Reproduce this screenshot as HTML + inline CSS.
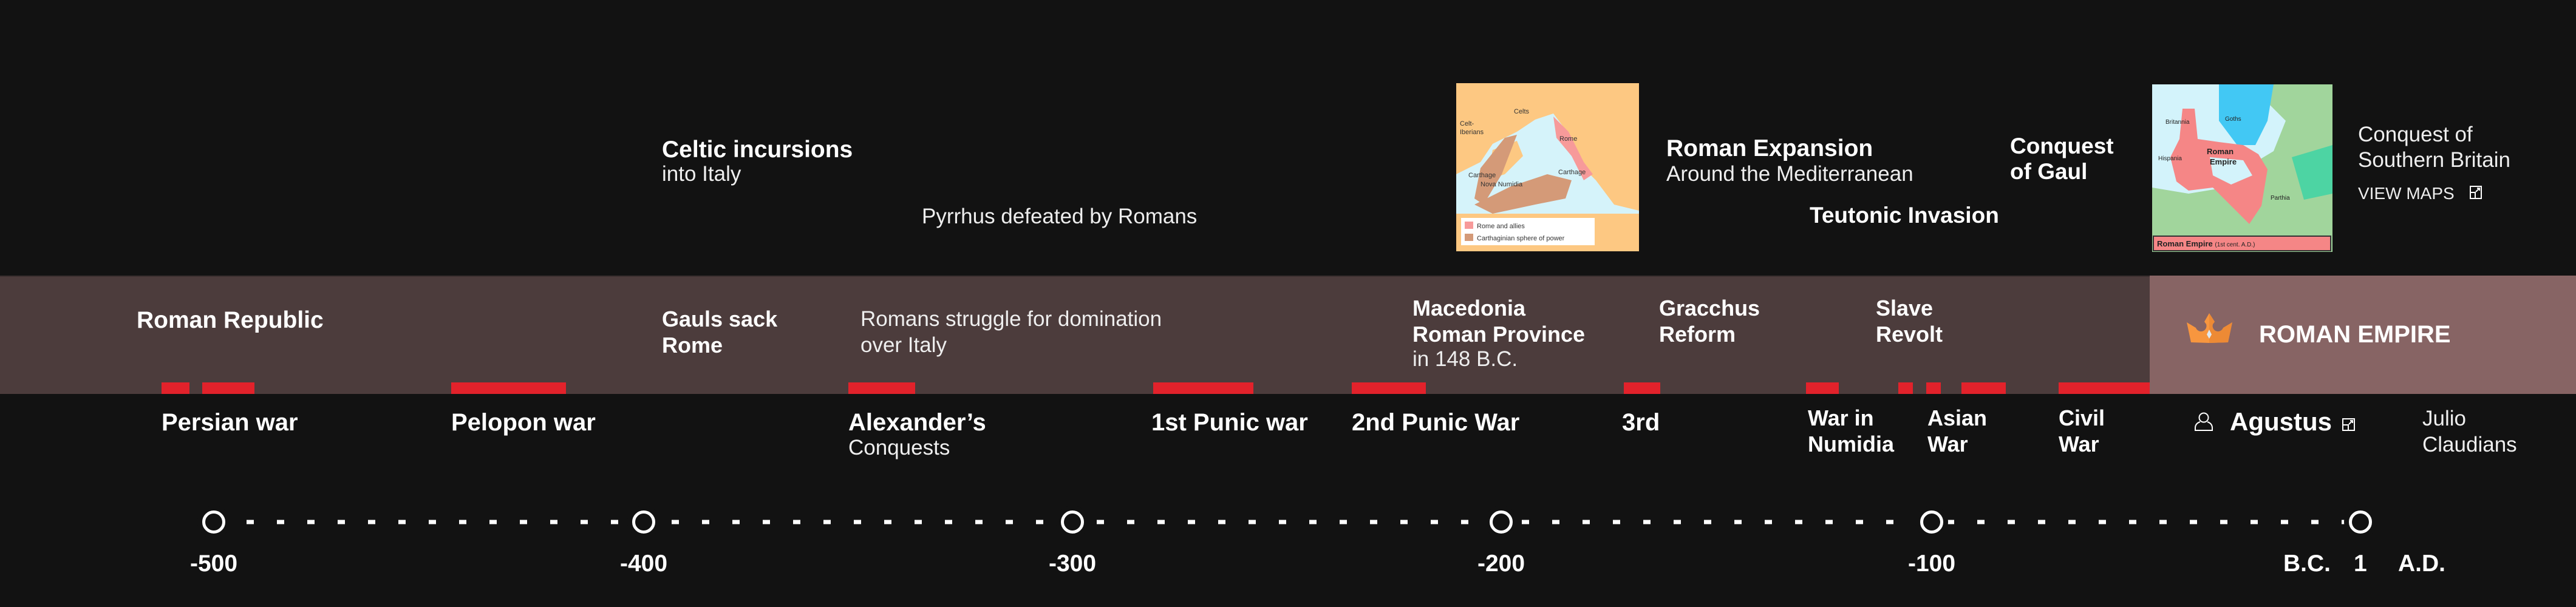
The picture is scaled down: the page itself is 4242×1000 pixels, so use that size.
<!DOCTYPE html>
<html><head><meta charset="utf-8"><style>
html,body{margin:0;padding:0;background:#121212;}
body{width:4242px;height:1000px;position:relative;overflow:hidden;font-family:"Liberation Sans",Arial,sans-serif;color:#fff;}
.t{position:absolute;white-space:nowrap;line-height:1;}
.b{font-weight:bold;font-size:39px;}
.l{font-weight:normal;font-size:35px;color:#eee;}
.r{position:absolute;background:#e2222b;top:630px;height:19px;}
.c{position:absolute;width:28px;height:28px;border:5px solid #fff;border-radius:50%;top:841px;background:#121212;box-shadow:0 0 0 8px #121212;}
.n{position:absolute;font-weight:bold;font-size:39px;top:909px;width:200px;text-align:center;line-height:1;}
</style></head><body>
<div style="position:absolute;left:0;top:454px;width:3540px;height:195px;background:#4c3c3c;border-top:2px solid #3a2f2f;box-sizing:border-box"></div>
<div style="position:absolute;left:3540px;top:454px;width:702px;height:195px;background:#876464"></div>

<div class="r" style="left:266px;width:46px"></div>
<div class="r" style="left:333px;width:86px"></div>
<div class="r" style="left:743px;width:189px"></div>
<div class="r" style="left:1397px;width:110px"></div>
<div class="r" style="left:1899px;width:165px"></div>
<div class="r" style="left:2226px;width:122px"></div>
<div class="r" style="left:2674px;width:60px"></div>
<div class="r" style="left:2974px;width:54px"></div>
<div class="r" style="left:3126px;width:24px"></div>
<div class="r" style="left:3172px;width:24px"></div>
<div class="r" style="left:3230px;width:73px"></div>
<div class="r" style="left:3390px;width:150px"></div>

<div class="t b" style="left:1090px;top:227px">Celtic incursions</div>
<div class="t l" style="left:1090px;top:269px">into Italy</div>
<div class="t l" style="left:1518px;top:339px">Pyrrhus defeated by Romans</div>

<svg style="position:absolute;left:2398px;top:137px" width="301" height="277" viewBox="0 0 301 277">
<rect width="301" height="277" fill="#fdc882"/>
<path d="M0 150 L40 130 L60 100 L100 80 L130 60 L160 50 L175 70 L200 130 L230 160 L260 200 L301 210 L301 277 L0 277Z" fill="#d5f3fa"/>
<path d="M60 110 L100 95 L110 120 L80 150 L50 160Z" fill="#fdc882"/>
<path d="M160 55 L185 80 L210 130 L225 150 L210 160 L190 120 L165 90Z" fill="#f79a9a"/>
<path d="M40 140 L80 90 L100 85 L75 150 L45 200 L30 190Z" fill="#d49a78"/>
<path d="M30 200 L90 170 L150 150 L190 160 L180 190 L130 200 L60 215Z" fill="#d49a78"/>
<path d="M0 215 L301 215 L301 277 L0 277Z" fill="#fdc882"/>
<rect x="8" y="222" width="220" height="45" fill="#fff"/>
<rect x="14" y="228" width="14" height="12" fill="#f79a9a"/><rect x="14" y="248" width="14" height="12" fill="#d49a78"/>
<text x="34" y="239" font-size="11" fill="#333" font-family="Liberation Sans">Rome and allies</text>
<text x="34" y="259" font-size="11" fill="#333" font-family="Liberation Sans">Carthaginian sphere of power</text>
<text x="95" y="50" font-size="11" fill="#333" font-family="Liberation Sans">Celts</text>
<text x="6" y="70" font-size="11" fill="#333" font-family="Liberation Sans">Celt-</text>
<text x="6" y="84" font-size="11" fill="#333" font-family="Liberation Sans">Iberians</text>
<text x="170" y="95" font-size="11" fill="#333" font-family="Liberation Sans">Rome</text>
<text x="168" y="150" font-size="11" fill="#333" font-family="Liberation Sans">Carthage</text>
<text x="20" y="155" font-size="11" fill="#333" font-family="Liberation Sans">Carthage</text>
<text x="40" y="170" font-size="11" fill="#333" font-family="Liberation Sans">Nova  Numidia</text>
</svg>

<div class="t b" style="left:2744px;top:225px">Roman Expansion</div>
<div class="t l" style="left:2744px;top:269px">Around the Mediterranean</div>
<div class="t b" style="left:3310px;top:222px;font-size:37px">Conquest</div>
<div class="t b" style="left:3310px;top:264px;font-size:37px">of Gaul</div>
<div class="t b" style="left:2980px;top:336px;font-size:37px">Teutonic Invasion</div>

<svg style="position:absolute;left:3544px;top:139px" width="297" height="276" viewBox="0 0 297 276">
<rect width="297" height="276" fill="#d3f3fb"/>
<path d="M160 0 L297 0 L297 276 L0 276 L0 170 L60 180 L120 170 L150 140 L200 110 L220 60Z" fill="#a1d59c"/>
<path d="M110 0 L200 0 L190 60 L170 100 L140 100 L110 60Z" fill="#42c8f4"/>
<path d="M230 120 L297 100 L297 180 L250 190Z" fill="#4dd4a3"/>
<path d="M50 40 L70 40 L75 90 L110 95 L150 100 L175 115 L190 140 L180 200 L160 230 L140 210 L100 170 L60 175 L40 160 L30 120 L45 90Z" fill="#f58686"/>
<path d="M95 120 L150 125 L165 150 L130 165 L100 150Z" fill="#d3f3fb"/>
<rect x="2" y="250" width="292" height="24" fill="#f58686" stroke="#333" stroke-width="2"/>
<text x="8" y="267" font-size="13" font-weight="bold" fill="#222" font-family="Liberation Sans">Roman Empire <tspan font-weight="normal" font-size="10">(1st cent. A.D.)</tspan></text>
<text x="90" y="115" font-size="13" font-weight="bold" fill="#222" font-family="Liberation Sans">Roman</text>
<text x="95" y="132" font-size="13" font-weight="bold" fill="#222" font-family="Liberation Sans">Empire</text>
<text x="22" y="65" font-size="10" fill="#222" font-family="Liberation Sans">Britannia</text>
<text x="120" y="60" font-size="10" fill="#222" font-family="Liberation Sans">Goths</text>
<text x="10" y="125" font-size="10" fill="#222" font-family="Liberation Sans">Hispania</text>
<text x="195" y="190" font-size="10" fill="#222" font-family="Liberation Sans">Parthia</text>
</svg>

<div class="t l" style="left:3883px;top:204px">Conquest of</div>
<div class="t l" style="left:3883px;top:246px">Southern Britain</div>
<div class="t l" style="left:3883px;top:305px;font-size:28px">VIEW MAPS</div>
<svg style="position:absolute;left:4067px;top:306px" width="20" height="22" viewBox="0 0 20 22" fill="none" stroke="#fff" stroke-width="2"><rect x="1" y="1" width="18" height="20"/><rect x="1" y="11" width="8" height="10"/><path d="M10 10 L16 4 M12 4 H16 V8"/></svg>

<div class="t b" style="left:225px;top:508px">Roman Republic</div>
<div class="t b" style="left:1090px;top:508px;font-size:36px">Gauls sack</div>
<div class="t b" style="left:1090px;top:551px;font-size:36px">Rome</div>
<div class="t l" style="left:1417px;top:508px">Romans struggle for domination</div>
<div class="t l" style="left:1417px;top:551px">over Italy</div>
<div class="t b" style="left:2326px;top:490px;font-size:36px">Macedonia</div>
<div class="t b" style="left:2326px;top:533px;font-size:36px">Roman Province</div>
<div class="t l" style="left:2326px;top:574px">in 148 B.C.</div>
<div class="t b" style="left:2732px;top:490px;font-size:36px">Gracchus</div>
<div class="t b" style="left:2732px;top:533px;font-size:36px">Reform</div>
<div class="t b" style="left:3089px;top:490px;font-size:36px">Slave</div>
<div class="t b" style="left:3089px;top:533px;font-size:36px">Revolt</div>

<svg style="position:absolute;left:3601px;top:516px" width="75" height="49" viewBox="0 0 75 49">
<path d="M37 0 L46 14 L43 18 A9 9 0 0 0 60 24 L75 15 L68 48 L37 49 L7 48 L0 15 L15 24 A9 9 0 0 0 32 18 L29 14Z" fill="#f7963f"/>
<path d="M37 0 L46 14 L43 18 A9 9 0 0 0 60 24 L75 15 L68 48 L37 49Z" fill="#ed8a35"/>
<path d="M37 27 L41 35 L37 42 L33 35Z" fill="#dfe8f0"/>
</svg>
<div class="t b" style="left:3720px;top:531px;font-size:40px">ROMAN EMPIRE</div>

<div class="t b" style="left:266px;top:676px;font-size:40px">Persian war</div>
<div class="t b" style="left:743px;top:676px;font-size:40px">Pelopon war</div>
<div class="t b" style="left:1397px;top:676px;font-size:40px">Alexander’s</div>
<div class="t l" style="left:1397px;top:720px">Conquests</div>
<div class="t b" style="left:1896px;top:676px;font-size:40px">1st Punic war</div>
<div class="t b" style="left:2226px;top:676px;font-size:40px">2nd Punic War</div>
<div class="t b" style="left:2671px;top:676px;font-size:40px">3rd</div>
<div class="t b" style="left:2977px;top:671px;font-size:36px">War in</div>
<div class="t b" style="left:2977px;top:714px;font-size:36px">Numidia</div>
<div class="t b" style="left:3174px;top:671px;font-size:36px">Asian</div>
<div class="t b" style="left:3174px;top:714px;font-size:36px">War</div>
<div class="t b" style="left:3390px;top:671px;font-size:36px">Civil</div>
<div class="t b" style="left:3390px;top:714px;font-size:36px">War</div>
<svg style="position:absolute;left:3614px;top:679px" width="30" height="32" viewBox="0 0 30 32" fill="none" stroke="#fff" stroke-width="2"><circle cx="15" cy="9" r="7.5"/><path d="M9 16 C3 18 1 22 1 26 V30 H29 V26 C29 22 27 18 21 16"/></svg>
<div class="t b" style="left:3672px;top:674px;font-size:42px">Agustus</div>
<svg style="position:absolute;left:3857px;top:689px" width="21" height="21" viewBox="0 0 21 21" fill="none" stroke="#fff" stroke-width="2"><rect x="1" y="1" width="19" height="19"/><rect x="1" y="11" width="9" height="9"/><path d="M11 10 L17 4 M13 4 H17 V8"/></svg>
<div class="t l" style="left:3989px;top:672px">Julio</div>
<div class="t l" style="left:3989px;top:715px">Claudians</div>

<svg style="position:absolute;left:0;top:840px" width="4242" height="40">
<line x1="372" y1="20" x2="3870" y2="20" stroke="#fff" stroke-width="7" stroke-dasharray="12 38" stroke-dashoffset="-34"/>
</svg>
<div class="c" style="left:333px"></div>
<div class="c" style="left:1041px"></div>
<div class="c" style="left:1747px"></div>
<div class="c" style="left:2453px"></div>
<div class="c" style="left:3162px"></div>
<div class="c" style="left:3868px"></div>
<div class="n" style="left:252px">-500</div>
<div class="n" style="left:960px">-400</div>
<div class="n" style="left:1666px">-300</div>
<div class="n" style="left:2372px">-200</div>
<div class="n" style="left:3081px">-100</div>
<div class="t b" style="left:3760px;top:909px">B.C.</div>
<div class="t b" style="left:3876px;top:909px">1</div>
<div class="t b" style="left:3949px;top:909px">A.D.</div>
</body></html>
